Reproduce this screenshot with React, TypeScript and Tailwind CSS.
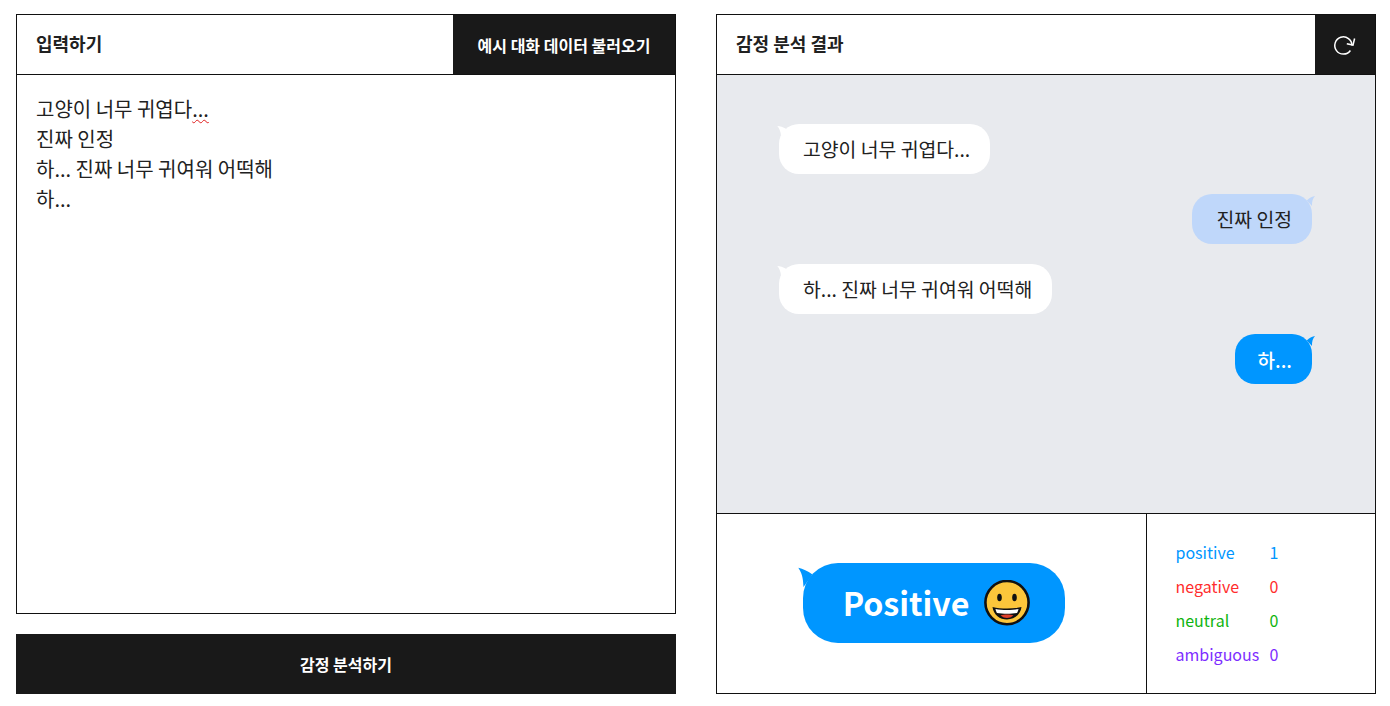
const font = { fontFamily: '"Noto Sans CJK KR", "Noto Sans", sans-serif' };

function TailLeft({ fill }: { fill: string }) {
  return (
    <svg className="absolute left-[-4px] top-0 w-[16px] h-[16px]" viewBox="0 0 16 16" aria-hidden="true">
      <path d="M2.3 2 C5 2.3 8 3 11.5 5 L6 12 C5.8 8 4.5 4.5 2.3 2 Z" fill={fill} />
    </svg>
  );
}

function TailRight({ fill }: { fill: string }) {
  return (
    <svg className="absolute right-[-4px] top-0 w-[12px] h-[12px]" viewBox="0 0 12 12" aria-hidden="true">
      <path d="M11 2 C8.5 2.5 6 3.6 2.7 6.4 L8 12 C7.8 7.5 8.8 4.5 11 2 Z" fill={fill} />
    </svg>
  );
}

function Other({ text }: { text: string }) {
  return (
    <div className="relative self-start h-[50px] flex items-center pl-6 pr-5 rounded-[20px] bg-white text-[#212121] text-[19.35px]">
      <TailLeft fill="#ffffff" />
      <span className="mt-[2px]">{text}</span>
    </div>
  );
}

function Mine({ text, blue }: { text: string; blue?: boolean }) {
  return (
    <div
      className={
        blue
          ? "relative self-end h-[50px] flex items-center pl-[23px] pr-5 rounded-[20px] text-[19px] font-medium bg-[#0096ff] text-white"
          : "relative self-end h-[50px] flex items-center pl-6 pr-5 rounded-[20px] text-[19.35px] bg-[#bfd7fa] text-[#212121]"
      }
    >
      <TailRight fill={blue ? "#0096ff" : "#bfd7fa"} />
      <span className="mt-[2px]">{text}</span>
    </div>
  );
}

function Smile() {
  return (
    <svg className="w-[46px] h-[46px]" viewBox="0 0 46 46" aria-hidden="true">
      <circle cx="23" cy="22.6" r="21.6" fill="#fcc63b" stroke="#111111" strokeWidth="2.6" />
      <ellipse cx="15.5" cy="17.5" rx="2.3" ry="3.8" fill="#111111" />
      <ellipse cx="30.5" cy="17.5" rx="2.3" ry="3.8" fill="#111111" />
      <path d="M8.5 27 C17 29 29 29 37.5 27 C36.5 35 30 39.5 23 39.5 C16 39.5 9.5 35 8.5 27 Z" fill="#111111" />
      <path d="M11.5 29 C18 30.4 28 30.4 34.5 29 C34.2 30.8 33.6 32 33 33 C27 34 19 34 13 33 C12.4 32 11.8 30.8 11.5 29 Z" fill="#ffffff" />
      <path d="M16.5 35.5 C20 34.3 26 34.3 29.5 35.5 C27.5 37.2 25 38 23 38 C21 38 18.5 37.2 16.5 35.5 Z" fill="#e0402b" />
    </svg>
  );
}

function Stat({ label, n, color }: { label: string; n: number; color: string }) {
  return (
    <div className={`flex h-[34px] items-center text-[16px] ${color}`}>
      <span className="w-[94px]">{label}</span>
      <span>{n}</span>
    </div>
  );
}

export default function App() {
  return (
    <div style={font} className="w-[1390px] h-[706px] bg-white flex gap-10 pl-4 pt-[14px] text-[#212121] overflow-hidden">
      <div className="w-[660px] flex flex-col gap-5">
        <div className="h-[600px] border border-[#111111] flex flex-col">
          <div className="h-[60px] flex items-center justify-between border-b border-[#111111] shrink-0">
            <h2 className="pl-[19px] text-[18px] font-bold mt-[-2px]">입력하기</h2>
            <button className="w-[222px] h-[59px] bg-[#191919] text-white text-[16px] font-bold">예시 대화 데이터 불러오기</button>
          </div>
          <div className="px-[19px] pt-[19px] text-[20px] leading-[30px] text-[#212121]">
            <div>
              고양이 너무 귀엽다<span className="underline decoration-wavy decoration-[#e02020] decoration-1 underline-offset-2">...</span>
            </div>
            <div>진짜 인정</div>
            <div>하... 진짜 너무 귀여워 어떡해</div>
            <div>하...</div>
          </div>
        </div>
        <button className="h-[60px] bg-[#191919] text-white text-[16px] font-bold">감정 분석하기</button>
      </div>

      <div className="w-[660px] h-[680px] border border-[#111111] flex flex-col">
        <div className="h-[60px] flex items-center justify-between border-b border-[#111111] shrink-0">
          <h2 className="pl-[19px] text-[18px] font-bold mt-[-2px]">감정 분석 결과</h2>
          <button className="w-[60px] h-[59px] bg-[#191919] flex items-center justify-center">
            <svg className="w-[40px] h-[32px] mt-[-1px]" viewBox="0 0 40 32" fill="none" stroke="#ffffff" strokeWidth="1.5" aria-hidden="true">
              <path d="M27 17.5 A8.6 8.6 0 1 0 25.4 22.5" />
              <path d="M29.6 10.5 L28 17 L21.8 15.7" />
            </svg>
          </button>
        </div>
        <div className="h-[439px] bg-[#e8eaee] flex flex-col gap-5 pt-[49px] pl-[62px] pr-[63px] border-b border-[#111111] shrink-0">
          <Other text="고양이 너무 귀엽다..." />
          <Mine text="진짜 인정" />
          <Other text="하... 진짜 너무 귀여워 어떡해" />
          <Mine text="하..." blue />
        </div>
        <div className="flex-1 flex">
          <div className="w-[430px] border-r border-[#111111] flex items-center justify-center">
            <div className="relative w-[262px] h-[80px] ml-[4px] mb-[2px] pl-[6px] rounded-[35px] bg-[#0096ff] flex items-center justify-center gap-[15px] text-white">
              <svg className="absolute left-[-8px] top-0 w-[24px] h-[24px]" viewBox="0 0 24 24" aria-hidden="true">
                <path d="M3.3 4.7 C8 5.5 12.5 8 17.5 11.5 L8.5 24 C8 18 8.3 12 3.3 4.7 Z" fill="#0096ff" />
              </svg>
              <span className="text-[32.2px] font-bold mt-[-1px]">Positive</span>
              <Smile />
            </div>
          </div>
          <div className="flex-1 pl-[28.5px] pb-[2px] flex flex-col justify-center">
            <Stat label="positive" n={1} color="text-[#0096ff]" />
            <Stat label="negative" n={0} color="text-[#ff2d2d]" />
            <Stat label="neutral" n={0} color="text-[#0fb40f]" />
            <Stat label="ambiguous" n={0} color="text-[#7d2dff]" />
          </div>
        </div>
      </div>
    </div>
  );
}
